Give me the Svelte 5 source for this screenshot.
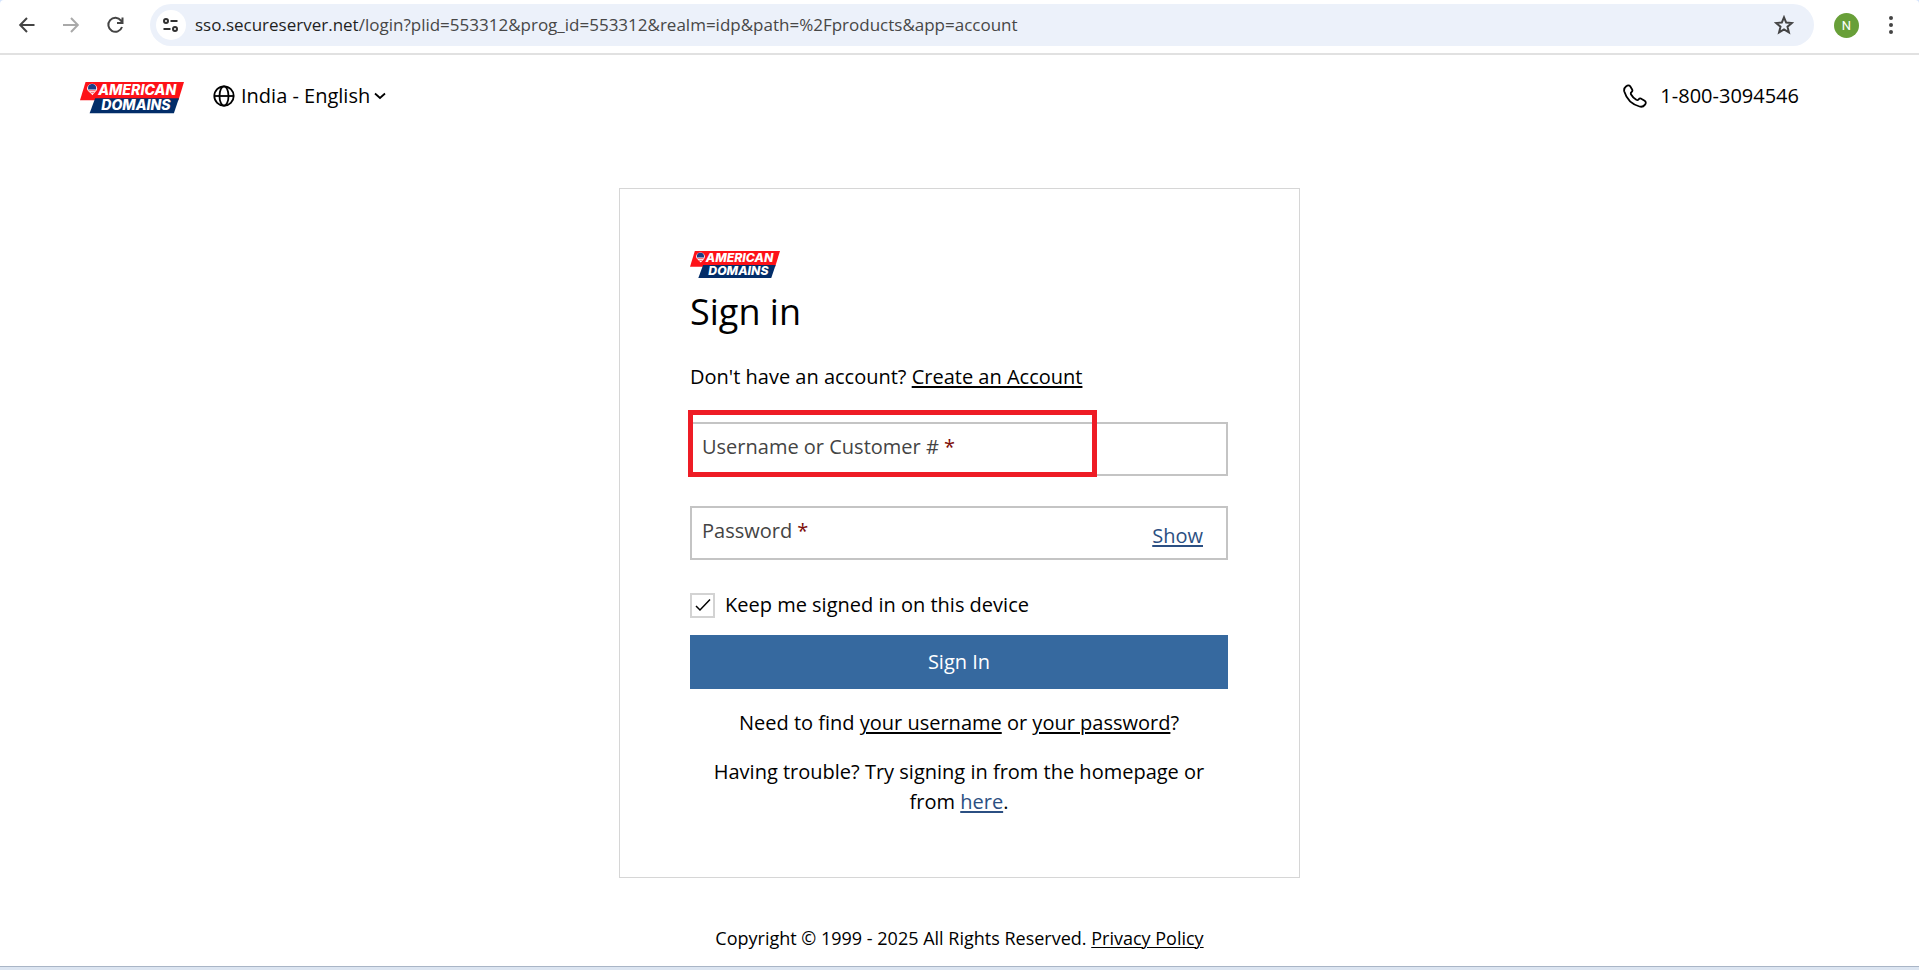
<script>
  let username = '';
  let password = '';
  let keepSignedIn = true;
  let showPassword = false;

  const host = 'sso.secureserver.net';
  const path = '/login?plid=553312&prog_id=553312&realm=idp&path=%2Fproducts&app=account';

  function toggleShow() {
    showPassword = !showPassword;
  }
</script>

{#snippet logo()}
  <svg class="logo" viewBox="0 0 103 31" role="img" aria-label="American Domains">
    <polygon points="5.5,0 103,0 97.5,18 0,18" fill="#fd1218" />
    <polygon points="15,16 98,16 93,31 9.5,31" fill="#022d69" />
    <path d="M7 6.5a5 4.8 0 0 1 10 0c0 2.6-2.8 4-4.6 6.6C10 10.5 7 9 7 6.5z" fill="#fff" />
    <path d="M8 6.5a4 4 0 0 1 8-1v2H8z" fill="#1c3d86" />
    <path d="M8.5 8.7h7M10.5 10.7h3.5" stroke="#f2525b" stroke-width="1" />
    <text x="18" y="13" font-size="14">AMERICAN</text>
    <text x="21" y="28" font-size="14">DOMAINS</text>
  </svg>
{/snippet}

<div class="page">
  <div class="browser">
    <div class="toolbar">
      <button class="nav" aria-label="Back">
        <svg width="18" height="18" viewBox="0 0 18 18"><path d="M16.5 9H3M9 2L2.2 9L9 16" /></svg>
      </button>
      <button class="nav muted" aria-label="Forward">
        <svg width="18" height="18" viewBox="0 0 18 18"><path d="M1 9h14M9 2L15.8 9L9 16" /></svg>
      </button>
      <button class="nav" aria-label="Reload">
        <svg width="18" height="18" viewBox="0 0 18 18"><path d="M16 11A7 7 0 1 1 15 4.600L16.500 6.500M16.500 1.500v5.500h-5.500" /></svg>
      </button>
      <div class="address">
        <button class="tune" aria-label="View site information">
          <svg width="18" height="18" viewBox="0 0 18 18">
            <circle cx="4" cy="5" r="2" /><path d="M8.5 5h7M1.5 13h7" /><circle cx="13" cy="13" r="2" />
          </svg>
        </button>
        <span class="url"><b>{host}</b>{path}</span>
        <button class="star" aria-label="Bookmark this tab">
          <svg width="20" height="20" viewBox="0 0 20 20"><path d="M10 2.3l2.2 5.3 5.7.4-4.4 3.7 1.4 5.6-4.900-3-4.900 3 1.400-5.600L2.100 8l5.700-.4z" /></svg>
        </button>
      </div>
      <button class="avatar" aria-label="Profile">N</button>
      <button class="menu" aria-label="Menu">
        <svg width="6" height="20" viewBox="0 0 6 20"><circle cx="3" cy="3" r="2" /><circle cx="3" cy="10" r="2" /><circle cx="3" cy="17" r="2" /></svg>
      </button>
    </div>
  </div>

  <header>
    {@render logo()}
    <button class="locale">
      <svg class="globe" width="22" height="22" viewBox="0 0 22 22">
        <circle cx="11" cy="11" r="9.7" /><ellipse cx="11" cy="11" rx="4.5" ry="9.7" /><path d="M1.3 11h19.4" />
      </svg>
      <span>India - English</span>
      <svg class="chevron" width="12" height="8" viewBox="0 0 12 8"><path d="M1 1.5l5 4.5 5-4.5" /></svg>
    </button>
    <a class="phone" href="tel:1-800-3094546">
      <svg width="24" height="24" viewBox="0 0 24 24">
        <path d="M3.2 2.3C4.6 1 6.3 1 7.2 2.3L9 5.2c.8 1.3.4 2.3-.6 3.1-.8.7-.8 1.3-.3 2.2 1.2 2.2 3 4 5.2 5.3.9.5 1.6.5 2.2-.3.9-1.2 2-1.4 3.2-.6l2.9 1.8c1.5 1 1.5 2.5.4 3.9-1.3 1.8-3.2 2.5-5.5 1.9C9.2 20.6 3.5 14.9 1.3 7.6 .7 5.3 1.4 3.7 3.2 2.3z" />
      </svg>
      <span>1-800-3094546</span>
    </a>
  </header>

  <main>
    {@render logo()}
    <h1>Sign in</h1>
    <p class="create">Don't have an account? <a href="#create">Create an Account</a></p>

    <form on:submit|preventDefault>
      <div class="field">
        <input id="username" type="text" bind:value={username} />
        {#if !username}
          <label for="username">Username or Customer # <em>*</em></label>
        {/if}
        <span class="highlight"></span>
      </div>
      <div class="field">
        <input id="password" type={showPassword ? 'text' : 'password'} bind:value={password} />
        {#if !password}
          <label for="password">Password <em>*</em></label>
        {/if}
        <button type="button" class="show" on:click={toggleShow}>{showPassword ? 'Hide' : 'Show'}</button>
      </div>
      <label class="keep">
        <span class="box">
          <input type="checkbox" bind:checked={keepSignedIn} />
          {#if keepSignedIn}
            <svg width="16" height="14" viewBox="0 0 16 14"><path d="M1 8l4 4L15 1.5" /></svg>
          {/if}
        </span>
        Keep me signed in on this device
      </label>
      <button class="submit" type="submit">Sign In</button>
    </form>

    <div class="help">
      <p>Need to find <a href="#username-help">your username</a> or <a href="#password-help">your password</a>?</p>
      <p>Having trouble? Try signing in from the homepage or from <a class="blue" href="#here">here</a>.</p>
    </div>
  </main>

  <footer>Copyright © 1999 - 2025 All Rights Reserved. <a href="#privacy">Privacy Policy</a></footer>
  <div class="edge"></div>
</div>

<style>
  :global(body) {
    background: #fff;
  }

  * {
    box-sizing: border-box;
  }

  .page {
    display: flex;
    flex-direction: column;
    min-height: 100vh;
    font-family: 'Open Sans', 'Noto Sans', sans-serif;
    font-size: 20px;
    line-height: 30px;
    color: #000;
  }

  button {
    padding: 0;
    border: none;
    background: none;
    font: inherit;
    color: inherit;
    cursor: pointer;
  }

  svg {
    display: block;
    flex: none;
    fill: none;
    stroke: currentColor;
    stroke-width: 2;
  }

  a {
    color: inherit;
    text-decoration: underline;
    text-decoration-thickness: 2px;
    text-underline-offset: 2px;
  }

  .browser {
    background: #d3e3fd;
    border-bottom: 2px solid #e1e1e1;
  }

  .toolbar {
    display: flex;
    align-items: center;
    padding: 4px 25px 7px 18px;
    background: #fff;
    border-radius: 4px 4px 0 0;
    color: #444;
  }

  .nav {
    margin-right: 26px;
  }

  .nav.muted {
    color: #a9a9a9;
  }

  .address {
    display: flex;
    flex: 1;
    align-items: center;
    height: 42px;
    padding: 0 20px 0 6px;
    border-radius: 21px;
    background: #ecf1fa;
  }

  .tune {
    display: flex;
    align-items: center;
    justify-content: center;
    width: 30px;
    height: 30px;
    border-radius: 50%;
    background: #fff;
    color: #303030;
  }

  .url {
    flex: 1;
    margin-left: 9px;
    font-size: 17px;
    color: #474747;
    white-space: nowrap;
  }

  .url b {
    font-weight: 400;
    color: #1f1f1f;
  }

  .avatar {
    width: 25px;
    height: 25px;
    margin: 0 29px 0 20px;
    border-radius: 50%;
    background: #689f38;
    color: #fff;
    font-family: Roboto, sans-serif;
    font-size: 13px;
    line-height: 25px;
  }

  .menu svg {
    fill: currentColor;
    stroke: none;
  }

  .logo {
    stroke: none;
    height: auto;
    overflow: visible;
  }

  .logo text {
    fill: #fff;
    font-family: Inter, sans-serif;
    font-weight: 800;
    font-style: italic;
  }

  header {
    display: flex;
    align-items: flex-start;
    padding: 27px 120px 0 80px;
    line-height: 28px;
  }

  header .logo {
    width: 104px;
  }

  .locale {
    display: flex;
    align-items: center;
    margin-left: 29px;
  }

  .globe {
    margin-right: 6px;
  }

  .globe,
  .chevron,
  .phone svg {
    stroke-width: 1.8;
  }

  .chevron {
    margin-left: 4px;
  }

  .phone {
    display: flex;
    align-items: center;
    gap: 13px;
    margin-left: auto;
    text-decoration: none;
  }

  main {
    width: 681px;
    max-width: 100%;
    margin: 75px auto 0;
    padding: 62px 71px 60px 70px;
    border: 1px solid #d6d6d6;
  }

  main .logo {
    width: 90px;
  }

  h1 {
    margin: 11px 0 0;
    font-size: 36px;
    font-weight: 400;
    line-height: 45px;
  }

  p {
    margin: 0;
  }

  .create {
    margin: 28px 0 30px;
  }

  form {
    display: flex;
    flex-direction: column;
  }

  .field {
    position: relative;
    margin-bottom: 30px;
  }

  .field input {
    display: block;
    width: 100%;
    height: 54px;
    padding: 0 10px;
    border: 2px solid #c4c4c4;
    font: inherit;
    outline: none;
  }

  .field label {
    position: absolute;
    top: 10px;
    left: 12px;
    color: #444;
  }

  em {
    font-style: normal;
    color: #7d0c08;
  }

  .show {
    position: absolute;
    top: 15px;
    right: 25px;
    text-decoration: underline;
    text-decoration-thickness: 2px;
    text-underline-offset: 2px;
    color: #2b4f82;
  }

  /* red frame drawn over the username box */
  .highlight {
    position: absolute;
    top: -12px;
    left: -2px;
    width: 409px;
    height: 67px;
    border: 5px solid #ee1c25;
    pointer-events: none;
  }

  .keep {
    display: flex;
    align-items: center;
    gap: 10px;
    margin-bottom: 15px;
  }

  .box {
    position: relative;
    width: 25px;
    height: 25px;
  }

  .box input {
    display: block;
    appearance: none;
    width: 100%;
    height: 100%;
    margin: 0;
    border: 2px solid #d3d3d3;
  }

  .box svg {
    position: absolute;
    top: 5px;
    left: 5px;
    stroke-width: 1.5;
    pointer-events: none;
  }

  .submit {
    height: 54px;
    background: #36699f;
    color: #fff;
  }

  .help {
    display: flex;
    flex-direction: column;
    gap: 19px;
    margin-top: 19px;
    text-align: center;
  }

  .blue {
    color: #2b4f82;
  }

  footer {
    margin-top: 47px;
    padding-bottom: 12px;
    font-size: 18px;
    line-height: 27px;
    text-align: center;
  }

  footer a {
    text-decoration-thickness: 1px;
  }

  .edge {
    height: 4px;
    margin-top: auto;
    border-top: 1px solid #a9b5c6;
    background: #dce5f1;
  }
</style>
